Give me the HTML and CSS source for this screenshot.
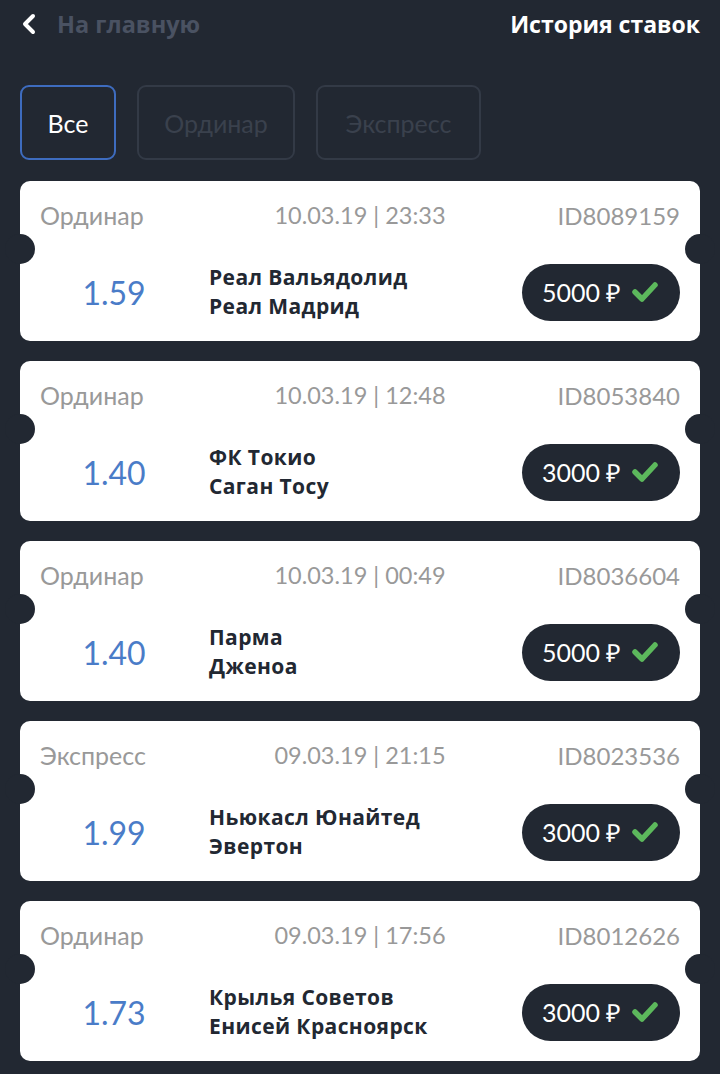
FILE: index.html
```html
<!DOCTYPE html>
<html lang="ru">
<head>
<meta charset="utf-8">
<title>История ставок</title>
<link rel="stylesheet" href="styles.css">
</head>
<body>
<div class="page">
  <header class="header">
    <a class="back">
      <svg class="chev" width="16" height="22" viewBox="0 0 16 22"><polyline points="12,3 4,11 12,19" fill="none" stroke="#fff" stroke-width="4" stroke-linecap="round" stroke-linejoin="round"/></svg>
      <span class="back-text">На главную</span>
    </a>
    <h1 class="title">История ставок</h1>
  </header>

  <nav class="tabs">
    <div class="tab active">Все</div>
    <div class="tab">Ординар</div>
    <div class="tab">Экспресс</div>
  </nav>

  <div class="list">
    <div class="card">
      <div class="top"><span class="type">Ординар</span><span class="date">10.03.19 | 23:33</span><span class="id">ID8089159</span></div>
      <div class="bottom"><div class="odds">1.59</div><div class="teams"><div>Реал Вальядолид</div><div>Реал Мадрид</div></div><div class="pill"><span>5000 ₽</span><svg class="check" width="28" height="22" viewBox="0 0 28 22"><polyline points="4,11 11,18 24,4" fill="none" stroke="#5cb85c" stroke-width="5.5" stroke-linecap="round" stroke-linejoin="round"/></svg></div></div>
    </div>
    <div class="card">
      <div class="top"><span class="type">Ординар</span><span class="date">10.03.19 | 12:48</span><span class="id">ID8053840</span></div>
      <div class="bottom"><div class="odds">1.40</div><div class="teams"><div>ФК Токио</div><div>Саган Тосу</div></div><div class="pill"><span>3000 ₽</span><svg class="check" width="28" height="22" viewBox="0 0 28 22"><polyline points="4,11 11,18 24,4" fill="none" stroke="#5cb85c" stroke-width="5.5" stroke-linecap="round" stroke-linejoin="round"/></svg></div></div>
    </div>
    <div class="card">
      <div class="top"><span class="type">Ординар</span><span class="date">10.03.19 | 00:49</span><span class="id">ID8036604</span></div>
      <div class="bottom"><div class="odds">1.40</div><div class="teams"><div>Парма</div><div>Дженоа</div></div><div class="pill"><span>5000 ₽</span><svg class="check" width="28" height="22" viewBox="0 0 28 22"><polyline points="4,11 11,18 24,4" fill="none" stroke="#5cb85c" stroke-width="5.5" stroke-linecap="round" stroke-linejoin="round"/></svg></div></div>
    </div>
    <div class="card">
      <div class="top"><span class="type">Экспресс</span><span class="date">09.03.19 | 21:15</span><span class="id">ID8023536</span></div>
      <div class="bottom"><div class="odds">1.99</div><div class="teams"><div>Ньюкасл Юнайтед</div><div>Эвертон</div></div><div class="pill"><span>3000 ₽</span><svg class="check" width="28" height="22" viewBox="0 0 28 22"><polyline points="4,11 11,18 24,4" fill="none" stroke="#5cb85c" stroke-width="5.5" stroke-linecap="round" stroke-linejoin="round"/></svg></div></div>
    </div>
    <div class="card">
      <div class="top"><span class="type">Ординар</span><span class="date">09.03.19 | 17:56</span><span class="id">ID8012626</span></div>
      <div class="bottom"><div class="odds">1.73</div><div class="teams"><div>Крылья Советов</div><div>Енисей Красноярск</div></div><div class="pill"><span>3000 ₽</span><svg class="check" width="28" height="22" viewBox="0 0 28 22"><polyline points="4,11 11,18 24,4" fill="none" stroke="#5cb85c" stroke-width="5.5" stroke-linecap="round" stroke-linejoin="round"/></svg></div></div>
    </div>
  </div>
</div>
</body>
</html>
```

FILE: styles.css
```css
html, body {
  margin: 0;
  padding: 0;
  background: #222832;
  font-family: Lato, "Open Sans", sans-serif;
}
.page {
  width: 720px;
  height: 1074px;
  overflow: hidden;
  padding: 0 20px;
  box-sizing: border-box;
}
.header {
  height: 48px;
  display: flex;
  align-items: center;
  justify-content: space-between;
}
.back {
  display: flex;
  align-items: center;
  gap: 20px;
}
.chev { display: block; margin-left: 1px; }
.back-text {
  font-family: "Open Sans", sans-serif;
  color: #4a5262;
  font-size: 23.5px;
  font-weight: 700;
}
.title {
  margin: 0;
  font-family: "Open Sans", sans-serif;
  color: #ffffff;
  font-size: 23px;
  font-weight: 700;
}
.tabs {
  display: flex;
  gap: 21px;
  margin-top: 37px;
}
.tab {
  height: 75px;
  box-sizing: border-box;
  border: 2px solid #333a46;
  border-radius: 9px;
  display: flex;
  align-items: center;
  justify-content: center;
  color: #3a414d;
  font-size: 25px;
  padding: 0 20px;
}
.tab:nth-child(2) { width: 158px; }
.tab:nth-child(3) { width: 165px; }
.tab.active {
  width: 96px;
  border-color: #3e6cbf;
  color: #ffffff;
}
.list {
  margin-top: 21px;
  display: flex;
  flex-direction: column;
  gap: 20px;
}
.card {
  position: relative;
  height: 160px;
  box-sizing: border-box;
  background: #ffffff;
  border-radius: 10px;
  padding: 19px 20px 0;
}
.card::before, .card::after {
  content: "";
  position: absolute;
  top: 53px;
  width: 30px;
  height: 30px;
  border-radius: 50%;
  background: #222832;
}
.card::before { left: -15px; }
.card::after { right: -15px; }
.top {
  display: grid;
  grid-template-columns: 1fr auto 1fr;
  height: 28px;
  align-items: center;
  color: #999999;
  font-size: 24px;
}
.type { font-size: 25px; }
.date { text-align: center; font-size: 23.5px; }
.id { text-align: right; }
.bottom {
  display: flex;
  align-items: center;
  margin-top: 35px;
}
.odds {
  width: 148px;
  text-align: center;
  color: #4a7cc8;
  font-size: 32px;
  margin-right: 21px;
}
.teams {
  flex: 1;
  font-family: "Open Sans", sans-serif;
  color: #222832;
  font-size: 21px;
  letter-spacing: 0.4px;
  font-weight: 700;
  line-height: 29px;
}
.pill {
  width: 158px;
  height: 57px;
  box-sizing: border-box;
  background: #222832;
  border-radius: 29px;
  display: flex;
  align-items: center;
  padding-left: 20px;
  gap: 10px;
  color: #ffffff;
  font-size: 25px;
}
.check { display: block; }
```
